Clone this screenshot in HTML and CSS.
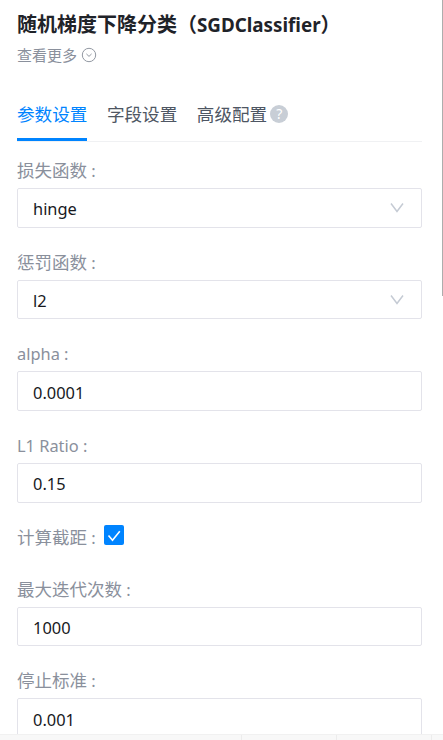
FILE: index.html
```
<!DOCTYPE html>
<html lang="zh-CN">
<head>
<meta charset="UTF-8">
<title>随机梯度下降分类</title>
<link rel="stylesheet" href="styles.css">
</head>

<body>
    <div class="panel">
        <h1 class="title">随机梯度下降分类（<span class="title_en">SGDClassifier</span>）</h1>
        <div class="more">
            <span>查看更多</span>
            <svg width="16" height="16" viewBox="0 0 16 16"><circle cx="8" cy="8" r="6.7"/><path d="M5.4 6.9L8 9.4l2.6-2.5"/></svg>
        </div>
        <div class="tabs">
            <div class="tab active">参数设置</div>
            <div class="tab">字段设置</div>
            <div class="tab">高级配置<span class="help">?</span></div>
        </div>
        <form class="form">
            <div class="item">
                <label class="label">损失函数<span class="en"> :</span></label>
                <div class="field select"><span>hinge</span><svg width="14" height="12" viewBox="0 0 14 12"><path d="M1 1.5l6 8 6-8"/></svg></div>
            </div>
            <div class="item">
                <label class="label">惩罚函数<span class="en"> :</span></label>
                <div class="field select"><span>l2</span><svg width="14" height="12" viewBox="0 0 14 12"><path d="M1 1.5l6 8 6-8"/></svg></div>
            </div>
            <div class="item">
                <label class="label"><span class="en">alpha :</span></label>
                <input class="field" type="text" value="0.0001">
            </div>
            <div class="item">
                <label class="label"><span class="en">L1 Ratio :</span></label>
                <input class="field" type="text" value="0.15">
            </div>
            <div class="item check_item">
                <label class="label">计算截距<span class="en"> :</span></label>
                <span class="checkbox"><svg width="20" height="20" viewBox="0 0 20 20"><path d="M4.5 10.5l4 4.8 7.3-9"/></svg></span>
            </div>
            <div class="item">
                <label class="label">最大迭代次数<span class="en"> :</span></label>
                <input class="field" type="text" value="1000">
            </div>
            <div class="item">
                <label class="label">停止标准<span class="en"> :</span></label>
                <input class="field" type="text" value="0.001">
            </div>
        </form>
    </div>
    <div class="scrollbar"></div>
    <div class="footer"><i></i><i></i><i></i></div>
</body>
</html>
```

FILE: styles.css
```
html,body{ width:100%; height:100%; padding:0; margin:0; overflow:hidden;}
body{ background:#fff; font-family:"Noto Sans","Noto Sans CJK SC",sans-serif; color:#1f2329;}
.panel{ padding:10px 21px 0 17px;}
.title{ margin:0; height:28px; line-height:28px; font-size:20px; font-weight:bold; white-space:nowrap; font-family:"Noto Sans CJK SC",sans-serif;}
.title_en{ font-family:"Noto Sans",sans-serif; font-size:18.8px;}
.more{ display:flex; height:20px; margin-top:8px; line-height:17px; font-size:15px; color:#8a909c; font-family:"Noto Sans CJK SC",sans-serif;}
.more svg{ margin:1px 0 0 4px; fill:none; stroke:#9298a2; stroke-width:1;}

.tabs{ display:flex; height:50px; margin-top:25px; gap:19.5px; border-bottom:1px solid #f0f1f3; line-height:46px; font-size:17.6px; color:#4e5663; font-family:"Noto Sans CJK SC",sans-serif;}
.tab{ display:flex; height:47px; border-bottom:3px solid transparent;}
.tab.active{ color:#0084ff; border-bottom-color:#0084ff;}
.help{ width:18px; height:18px; margin:14px 0 0 3px; border-radius:50%; background:#c8ced6; color:#fff; font:14px/18px "Noto Sans",sans-serif; text-align:center;}

.form{ margin:0; padding-top:16px;}
.item{ height:91.7px;}
.label{ display:block; height:26px; line-height:24px; font-size:17.5px; color:#8a909c; white-space:pre; font-family:"Noto Sans CJK SC",sans-serif;}
.en{ font-family:"Noto Sans",sans-serif; font-size:16.4px;}
.field{ display:block; box-sizing:border-box; width:100%; height:39.6px; margin:4px 0 0; padding:2px 15px 0; border:1px solid #e3e3ea; border-radius:2px; outline:none; background:#fff; color:#17191d; font:16.4px/36px "Noto Sans",sans-serif;}
.select{ display:flex; justify-content:space-between;}
.select svg{ margin:11px 2px 0 0; fill:none; stroke:#c5cbd4; stroke-width:1.5;}
.check_item{ display:flex; height:52px;}
.checkbox{ width:20px; height:20px; margin:0 0 0 8px; border-radius:2px; background:#0084ff;}
.checkbox svg{ display:block; fill:none; stroke:#fff; stroke-width:1.6;}

/* 滚动条和底部栏盖在表单上面 */
.scrollbar{ position:absolute; top:0; right:0; width:1px; height:296px; background:#adadad;}
.footer{ position:absolute; left:0; bottom:0; display:flex; justify-content:flex-end; gap:94px; box-sizing:border-box; width:100%; height:6px; padding-right:11px; border-top:1px solid #f1f1f1; background:#f8f8f8;}
.footer i{ width:1px; background:#ececec;}
```
